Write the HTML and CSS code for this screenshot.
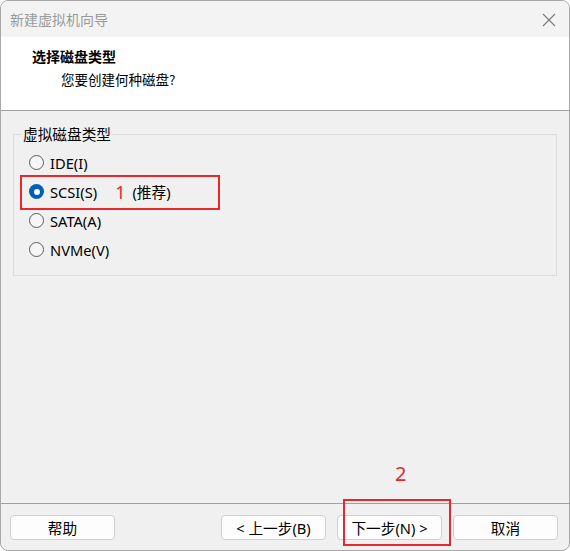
FILE: index.html
```html
<!DOCTYPE html>
<html lang="zh-CN">
<head>
<meta charset="utf-8">
<title>新建虚拟机向导</title>
<link rel="stylesheet" href="styles.css">
</head>
<body>
<div class="window">
  <div class="titlebar">
    <span class="title">新建虚拟机向导</span>
    <svg class="close" width="14" height="14" viewBox="0 0 14 14"><path d="M1 1 L13 13 M13 1 L1 13" stroke="#7a7a7a" stroke-width="1.1" fill="none"/></svg>
  </div>
  <div class="header">
    <div class="h-title">选择磁盘类型</div>
    <div class="h-sub">您要创建何种磁盘?</div>
  </div>
  <div class="content">
    <fieldset class="group">
      <legend class="legend">虚拟磁盘类型</legend>
      <div class="option"><span class="radio"></span><span class="label">IDE(I)</span></div>
      <div class="option"><span class="radio checked"></span><span class="label">SCSI(S)</span><span class="mark1">1</span><span class="label rec">(推荐)</span></div>
      <div class="option"><span class="radio"></span><span class="label">SATA(A)</span></div>
      <div class="option"><span class="radio"></span><span class="label">NVMe(V)</span></div>
    </fieldset>
  </div>
  <div class="footer">
    <button class="btn">帮助</button>
    <div class="right">
      <button class="btn">&lt; 上一步(B)</button>
      <button class="btn">下一步(N) &gt;</button>
      <button class="btn">取消</button>
    </div>
  </div>
  <div class="box box1"></div>
  <div class="box box2"></div>
  <div class="mark2">2</div>
</div>
</body>
</html>
```
FILE: styles.css
```css
html, body {
  margin: 0;
  padding: 0;
  background: #ffffff;
}
.window {
  position: relative;
  width: 570px;
  height: 551px;
  box-sizing: border-box;
  border: 1px solid #a8a8a8;
  border-radius: 8px;
  overflow: hidden;
  background: #f0f0f0;
  display: flex;
  flex-direction: column;
  font-family: "Noto Sans", "Noto Sans CJK SC", sans-serif;
  color: #000;
}
.titlebar {
  height: 36px;
  flex: none;
  background: #f3f3f3;
  display: flex;
  align-items: center;
  justify-content: space-between;
  padding: 0 13px 0 9px;
}
.title {
  font-family: "Noto Sans CJK SC", sans-serif;
  font-size: 14px;
  color: #9a9a9a;
  line-height: 20px;
}
.close {
  display: block;
  margin-top: 1px;
}
.header {
  height: 72px;
  flex: none;
  background: #ffffff;
  border-bottom: 1px solid #a0a0a0;
  padding: 9px 0 0 31px;
  box-sizing: border-box;
  height: 74px;
}
.h-title {
  font-family: "Noto Sans CJK SC", sans-serif;
  font-weight: bold;
  font-size: 14px;
  line-height: 20px;
}
.h-sub {
  font-family: "Noto Sans CJK SC", sans-serif;
  font-size: 13.5px;
  line-height: 20px;
  margin-top: 3px;
  padding-left: 29px;
}
.content {
  flex: 1;
  padding: 13px 12px 0 12px;
}
.group {
  margin: 0;
  border: 1px solid #dcdcdc;
  padding: 4px 14px 10px 15px;
  height: 152px;
  box-sizing: border-box;
}
.legend {
  font-family: "Noto Sans CJK SC", sans-serif;
  font-size: 14.67px;
  line-height: 20px;
  padding: 0 1px;
  margin-left: -7px;
}
.option {
  height: 29px;
  display: flex;
  align-items: center;
}
.radio {
  width: 15px;
  height: 15px;
  box-sizing: border-box;
  border: 1px solid #5c5c5c;
  border-radius: 50%;
  background: #f6f6f6;
  flex: none;
  margin-right: 6px;
  position: relative;
}
.radio.checked {
  border: none;
  background: #005fb8;
}
.radio.checked::after {
  content: "";
  position: absolute;
  left: 4.5px;
  top: 4.5px;
  width: 6px;
  height: 6px;
  border-radius: 50%;
  background: #ffffff;
}
.label {
  font-size: 14.67px;
  line-height: 20px;
}
.mark1 {
  color: #e8262c;
  font-size: 18px;
  line-height: 20px;
  margin-left: 18px;
  margin-right: 7px;
}
.footer {
  flex: none;
  height: 47px;
  box-sizing: border-box;
  border-top: 1px solid #a0a0a0;
  padding: 11px 11px 0 9px;
  display: flex;
  justify-content: space-between;
}
.right {
  display: flex;
  gap: 11px;
}
.btn {
  width: 105px;
  height: 25px;
  box-sizing: border-box;
  border: 1px solid #d0d0d0;
  border-radius: 4px;
  background: #fdfdfd;
  font-family: "Noto Sans", "Noto Sans CJK SC", sans-serif;
  font-size: 14.67px;
  line-height: 20px;
  padding: 0;
  color: #000;
}
.box {
  position: absolute;
  border: 2px solid #e8262c;
  box-sizing: border-box;
}
.box1 {
  left: 19px;
  top: 174px;
  width: 200px;
  height: 35px;
}
.box2 {
  left: 342px;
  top: 498px;
  width: 108px;
  height: 47px;
}
.mark2 {
  position: absolute;
  left: 394px;
  top: 459px;
  color: #e8262c;
  font-family: "Noto Sans", sans-serif;
  font-size: 20px;
  line-height: 28px;
}
```
